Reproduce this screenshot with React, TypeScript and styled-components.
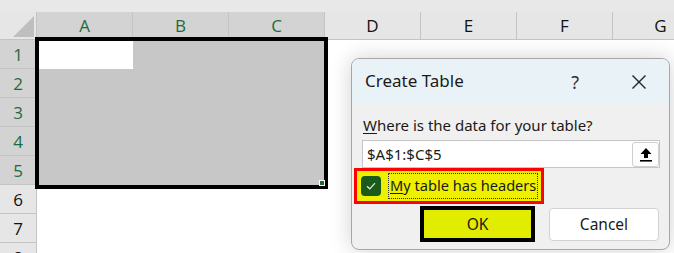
import styled, { createGlobalStyle } from 'styled-components';

const GlobalStyle = createGlobalStyle`
  html, body {
    margin: 0;
    padding: 0;
    background: #ffffff;
    overflow: hidden;
  }
  body {
    font-family: 'Noto Sans', 'Open Sans', sans-serif;
  }
`;

const COLUMNS = ['A', 'B', 'C', 'D', 'E', 'F', 'G'];
const ROWS = [1, 2, 3, 4, 5, 6, 7, 8];
const SELECTED_COLS = 3;
const SELECTED_ROWS = 5;

const Page = styled.div`
  position: relative;
  width: 674px;
  height: 253px;
  overflow: hidden;
  background: #ffffff;
`;

const TopStrip = styled.div`
  height: 12px;
  background: #e8e8e8;
`;

const Sheet = styled.div`
  position: relative;
  display: grid;
  grid-template-columns: 37px repeat(7, 96px);
  grid-template-rows: 28px repeat(8, 29px);
`;

const Corner = styled.div`
  position: relative;
  background: #e6e6e6;
  border-right: 1px solid #c4c4c4;
  border-bottom: 1px solid #c4c4c4;
  box-sizing: border-box;

  &::after {
    content: '';
    position: absolute;
    right: 2px;
    bottom: 2px;
    width: 0;
    height: 0;
    border-left: 21px solid transparent;
    border-bottom: 21px solid #bfbfbf;
  }
`;

const ColHeader = styled.div<{ $active: boolean }>`
  display: flex;
  align-items: flex-end;
  justify-content: center;
  padding-bottom: 1px;
  box-sizing: border-box;
  background: ${(p) => (p.$active ? '#d3d3d3' : '#e6e6e6')};
  border-right: 1px solid #c4c4c4;
  border-bottom: 1px solid #c4c4c4;
  color: ${(p) => (p.$active ? '#1d6b3c' : '#111111')};
  font-family: 'Open Sans', 'Noto Sans', sans-serif;
  font-size: 17px;
  line-height: 24px;
`;

const RowHeader = styled.div<{ $active: boolean }>`
  display: flex;
  align-items: center;
  justify-content: center;
  box-sizing: border-box;
  background: ${(p) => (p.$active ? '#d3d3d3' : '#e6e6e6')};
  border-right: 1px solid #c4c4c4;
  border-bottom: 1px solid #c4c4c4;
  color: ${(p) => (p.$active ? '#1d6b3c' : '#111111')};
  font-family: 'Open Sans', 'Noto Sans', sans-serif;
  font-size: 17px;
`;

const Cell = styled.div<{ $fill: 'white' | 'grey' }>`
  background: ${(p) => (p.$fill === 'grey' ? '#c7c7c7' : '#ffffff')};
`;

const Selection = styled.div`
  position: absolute;
  left: 35px;
  top: 25px;
  width: 293px;
  height: 152px;
  box-sizing: border-box;
  border: 4px solid #000000;
  pointer-events: none;

  &::after {
    content: '';
    position: absolute;
    right: -1px;
    bottom: -1px;
    width: 4px;
    height: 4px;
    background: #1d6b3c;
    border: 1px solid #ffffff;
  }
`;

const Dialog = styled.div`
  position: absolute;
  left: 351px;
  top: 58px;
  width: 319px;
  height: 192px;
  box-sizing: border-box;
  border: 1px solid #a6a6a6;
  border-radius: 8px;
  background: #f0f0f0;
  overflow: hidden;
  box-shadow: 0 0 22px rgba(0, 0, 0, 0.18);
  font-family: 'Noto Sans', 'Open Sans', sans-serif;
  color: #1a1a1a;
`;

const TitleBar = styled.div`
  display: flex;
  align-items: center;
  height: 45px;
  padding: 0 22px 0 13px;
  background: #e9f3f7;
`;

const Title = styled.div`
  flex: 1;
  font-size: 17px;
  padding-bottom: 2px;
`;

const HelpMark = styled.span`
  font-size: 18px;
  color: #333333;
  margin-right: 52px;
`;

const Body = styled.div`
  display: flex;
  flex-direction: column;
  padding: 0 9px 0 2px;
`;

const Prompt = styled.div`
  margin: 10px 0 0 9px;
  font-size: 15px;
  line-height: 22px;
`;

const Key = styled.span`
  text-decoration: underline;
  text-underline-offset: 2px;
`;

const RangeField = styled.div`
  display: flex;
  align-items: center;
  height: 28px;
  margin: 4px 0 0 8px;
  box-sizing: border-box;
  background: #ffffff;
  border: 1px solid #c6c6c6;
`;

const RangeText = styled.div`
  flex: 1;
  padding-left: 4px;
  font-size: 15px;
`;

const PickButton = styled.div`
  display: flex;
  align-items: center;
  justify-content: center;
  width: 27px;
  height: 25px;
  box-sizing: border-box;
  border: 1px solid #cfcfcf;
  border-radius: 3px;
  background: #fdfdfd;
`;

const HeaderToggle = styled.div`
  display: flex;
  align-items: center;
  gap: 7px;
  width: 190px;
  height: 36px;
  box-sizing: border-box;
  padding-left: 4px;
  background: #eef000;
  border: 3px solid #ff0000;
`;

const CheckBox = styled.div`
  display: flex;
  flex-shrink: 0;
  align-items: center;
  justify-content: center;
  width: 20px;
  height: 20px;
  border-radius: 4px;
  background: #1a5a1a;
`;

const ToggleLabel = styled.div`
  height: 26px;
  padding: 0 1px;
  box-sizing: border-box;
  border: 1px dotted #333333;
  font-size: 14.6px;
  line-height: 23px;
  white-space: nowrap;
`;

const Actions = styled.div`
  display: flex;
  align-items: center;
  gap: 14px;
  margin: 2px 0 0 66px;
`;

const DialogButton = styled.div<{ $primary?: boolean }>`
  display: flex;
  align-items: center;
  justify-content: center;
  box-sizing: border-box;
  font-size: 15.5px;
  width: ${(p) => (p.$primary ? '115px' : '110px')};
  height: ${(p) => (p.$primary ? '36px' : '33px')};
  background: ${(p) => (p.$primary ? '#e1ec00' : '#ffffff')};
  border: ${(p) => (p.$primary ? '4px solid #000000' : '1px solid #d2d2d2')};
  border-radius: ${(p) => (p.$primary ? '0' : '4px')};
`;

const UploadIcon = () => (
  <svg width="14" height="15" viewBox="0 0 14 15">
    <path d="M7 1 L12.5 7 H9 V11 H5 V7 H1.5 Z" fill="#000" />
    <rect x="1" y="13" width="12" height="1.6" fill="#000" />
  </svg>
);

const CheckMark = () => (
  <svg width="12" height="10" viewBox="0 0 12 10">
    <path d="M2 5.2 L4.8 7.8 L10 2.2" stroke="#e4efcf" strokeWidth="1.2" fill="none" />
  </svg>
);

const CloseIcon = () => (
  <svg width="16" height="16" viewBox="0 0 16 16">
    <path d="M1.5 1.5 L14.5 14.5 M14.5 1.5 L1.5 14.5" stroke="#222" strokeWidth="1.4" />
  </svg>
);

export default function App() {
  return (
    <Page>
      <GlobalStyle />
      <TopStrip />
      <Sheet>
        <Corner />
        {COLUMNS.map((c, i) => (
          <ColHeader key={c} $active={i < SELECTED_COLS}>
            {c}
          </ColHeader>
        ))}
        {ROWS.map((r) => [
          <RowHeader key={`h${r}`} $active={r <= SELECTED_ROWS}>
            {r}
          </RowHeader>,
          ...COLUMNS.map((c, i) => (
            <Cell
              key={`${c}${r}`}
              $fill={r <= SELECTED_ROWS && i < SELECTED_COLS && !(r === 1 && i === 0) ? 'grey' : 'white'}
            />
          )),
        ])}
        <Selection />
      </Sheet>

      <Dialog>
        <TitleBar>
          <Title>Create Table</Title>
          <HelpMark>?</HelpMark>
          <CloseIcon />
        </TitleBar>
        <Body>
          <Prompt>
            <Key>W</Key>here is the data for your table?
          </Prompt>
          <RangeField>
            <RangeText>$A$1:$C$5</RangeText>
            <PickButton>
              <UploadIcon />
            </PickButton>
          </RangeField>
          <HeaderToggle>
            <CheckBox>
              <CheckMark />
            </CheckBox>
            <ToggleLabel>
              <Key>M</Key>y table has headers
            </ToggleLabel>
          </HeaderToggle>
          <Actions>
            <DialogButton $primary>OK</DialogButton>
            <DialogButton>Cancel</DialogButton>
          </Actions>
        </Body>
      </Dialog>
    </Page>
  );
}
